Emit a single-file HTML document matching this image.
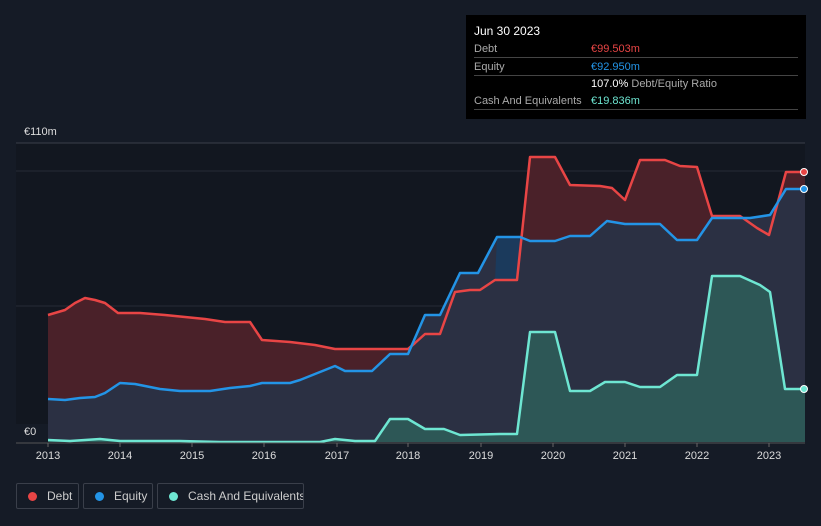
<!DOCTYPE html>
<html><head><meta charset="utf-8"><style>
html,body{margin:0;width:821px;height:526px;overflow:hidden}
body{background:#151b26;font-family:"Liberation Sans",sans-serif;position:relative}
.tt{position:absolute;left:466px;top:15px;width:340px;height:104px;background:#000;color:#fff;font-size:11px}
.tt .r{position:absolute;left:8px;right:8px;border-bottom:1px solid #444;height:17px}
.lab{color:#aaa}
.leg{position:absolute;top:483px;height:26px;border:1px solid #3a3f4a;border-radius:2px;color:#ccc;font-size:12px;line-height:24px;box-sizing:border-box;white-space:nowrap;overflow:hidden}
.leg i{display:inline-block;width:9px;height:9px;border-radius:50%;margin:0 10px 0 11px;vertical-align:-1px}
.yr{position:absolute;top:450px;color:#ddd;font-size:11px;width:40px;text-align:center}
</style></head><body>
<svg width="821" height="526" style="position:absolute;left:0;top:0">
<rect x="16" y="143" width="789" height="299" fill="#121720"/>
<line x1="16" y1="143" x2="805" y2="143" stroke="#3a3f4a"/>
<line x1="16" y1="171" x2="805" y2="171" stroke="#262b36"/>
<line x1="16" y1="306" x2="805" y2="306" stroke="#262b36"/>
<g stroke-linejoin="round">
<path d="M48,315 L65,310 75,303 85,298 95,300 105,303 118,313 140,313 165,315 205,319 225,322 250,322 262,340 290,342 315,345 335,349 408,349 415,343 425,334 440,334 455,292 470,290 480,290 495,280 517,280 530,157 555,157 570,185 600,186 612,188 625,200 640,160 665,160 680,166 697,167 712,216 740,216 757,228 769,235 786,172 805,172 L805,442 48,442Z" fill="#4a2129"/>
<path d="M48,399 L65,400 80,398 95,397 105,393 120,383 135,384 150,387 160,389 180,391 210,391 230,388 250,386 262,383 290,383 300,380 320,372 335,366 345,371 372,371 390,354 408,354 425,315 440,315 460,273 478,273 497,237 520,237 530,241 555,241 570,236 590,236 607,221 625,224 660,224 677,240 697,240 712,218 750,218 770,215 786,189 805,189 L805,442 48,442Z" fill="#2b3043"/>
<path d="M497,237 L520,237 517,280 495,280Z" fill="#1b3a5c"/>
<path d="M48,440 L70,441 100,439 120,441 180,441 220,442 320,442 335,439 355,441 375,441 390,419 408,419 425,429 444,429 460,435 500,434 517,434 530,332 555,332 570,391 590,391 605,382 625,382 640,387 660,387 677,375 697,375 712,276 740,276 760,285 770,292 785,389 805,389 L805,442 48,442Z" fill="#2d5756"/>
<path d="M48,315 L65,310 75,303 85,298 95,300 105,303 118,313 140,313 165,315 205,319 225,322 250,322 262,340 290,342 315,345 335,349 408,349 415,343 425,334 440,334 455,292 470,290 480,290 495,280 517,280 530,157 555,157 570,185 600,186 612,188 625,200 640,160 665,160 680,166 697,167 712,216 740,216 757,228 769,235 786,172 805,172" fill="none" stroke="#e84545" stroke-width="2.5"/>
<path d="M48,399 L65,400 80,398 95,397 105,393 120,383 135,384 150,387 160,389 180,391 210,391 230,388 250,386 262,383 290,383 300,380 320,372 335,366 345,371 372,371 390,354 408,354 425,315 440,315 460,273 478,273 497,237 520,237 530,241 555,241 570,236 590,236 607,221 625,224 660,224 677,240 697,240 712,218 750,218 770,215 786,189 805,189" fill="none" stroke="#2394e6" stroke-width="2.5"/>
<path d="M48,440 L70,441 100,439 120,441 180,441 220,442 320,442 335,439 355,441 375,441 390,419 408,419 425,429 444,429 460,435 500,434 517,434 530,332 555,332 570,391 590,391 605,382 625,382 640,387 660,387 677,375 697,375 712,276 740,276 760,285 770,292 785,389 805,389" fill="none" stroke="#6ee6d2" stroke-width="2.5"/>
</g>
<line x1="16" y1="443" x2="805" y2="443" stroke="#555"/>
<g stroke="#666"><line x1="48" y1="443" x2="48" y2="447"/><line x1="120" y1="443" x2="120" y2="447"/><line x1="192" y1="443" x2="192" y2="447"/><line x1="264" y1="443" x2="264" y2="447"/><line x1="337" y1="443" x2="337" y2="447"/><line x1="408" y1="443" x2="408" y2="447"/><line x1="481" y1="443" x2="481" y2="447"/><line x1="553" y1="443" x2="553" y2="447"/><line x1="625" y1="443" x2="625" y2="447"/><line x1="697" y1="443" x2="697" y2="447"/><line x1="769" y1="443" x2="769" y2="447"/></g>
<circle cx="804" cy="172" r="3.5" fill="#e84545" stroke="#fff" stroke-width="1"/>
<circle cx="804" cy="189" r="3.5" fill="#2394e6" stroke="#fff" stroke-width="1"/>
<circle cx="804" cy="389" r="3.5" fill="#6ee6d2" stroke="#fff" stroke-width="1"/>
<rect x="16" y="424" width="32" height="18" fill="#151b26"/>
</svg>
<div style="position:absolute;left:24px;top:126px;color:#ddd;font-size:11px">€110m</div>
<div style="position:absolute;left:24px;top:426px;color:#ddd;font-size:11px">€0</div>
<div class="yr" style="left:28px">2013</div><div class="yr" style="left:100px">2014</div><div class="yr" style="left:172px">2015</div><div class="yr" style="left:244px">2016</div><div class="yr" style="left:317px">2017</div><div class="yr" style="left:388px">2018</div><div class="yr" style="left:461px">2019</div><div class="yr" style="left:533px">2020</div><div class="yr" style="left:605px">2021</div><div class="yr" style="left:677px">2022</div><div class="yr" style="left:749px">2023</div>
<div class="tt">
<div style="position:absolute;left:8px;top:9px;font-size:12px">Jun 30 2023</div>
<div class="r" style="top:25px"><span class="lab" style="position:absolute;top:3px">Debt</span><span style="position:absolute;left:117px;top:3px;color:#e84545">€99.503m</span></div>
<div class="r" style="top:43px"><span class="lab" style="position:absolute;top:3px">Equity</span><span style="position:absolute;left:117px;top:3px;color:#2394e6">€92.950m</span></div>
<div style="position:absolute;left:125px;top:63px"><span style="color:#fff">107.0%</span> <span class="lab">Debt/Equity Ratio</span></div>
<div class="r" style="top:77px"><span class="lab" style="position:absolute;top:3px">Cash And Equivalents</span><span style="position:absolute;left:117px;top:3px;color:#6ee6d2">€19.836m</span></div>
</div>
<div class="leg" style="left:16px;width:63px"><i style="background:#e84545"></i>Debt</div>
<div class="leg" style="left:83px;width:70px"><i style="background:#2394e6"></i>Equity</div>
<div class="leg" style="left:157px;width:147px"><i style="background:#6ee6d2"></i>Cash And Equivalents</div>
</body></html>
